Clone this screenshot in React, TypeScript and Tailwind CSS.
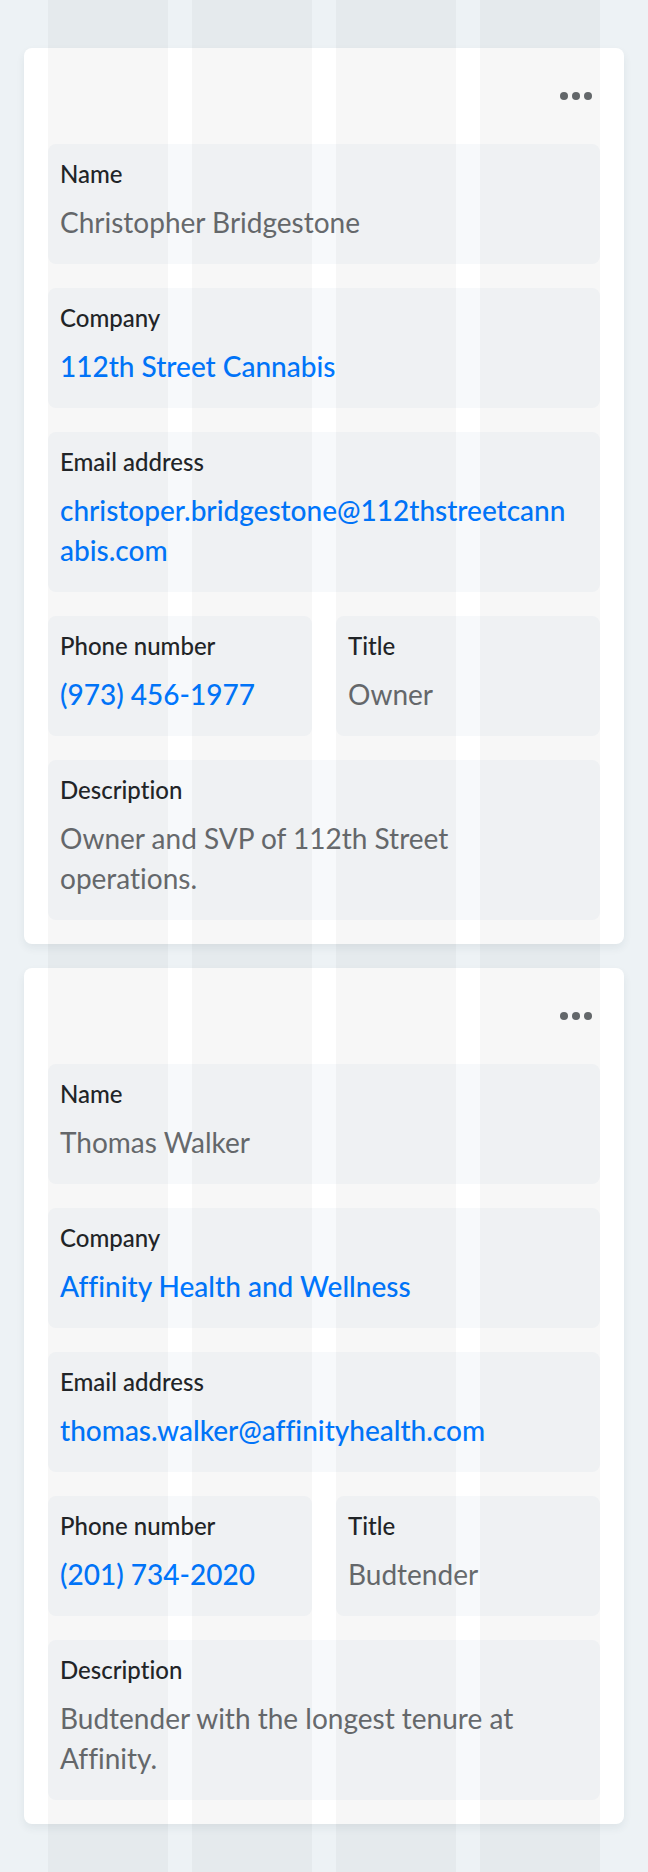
import React from "react";

type Contact = {
  name: string;
  company: string;
  email: string[];
  phone: string;
  title: string;
  description: string[];
};

const contacts: Contact[] = [
  {
    name: "Christopher Bridgestone",
    company: "112th Street Cannabis",
    email: ["christoper.bridgestone@112thstreetcann", "abis.com"],
    phone: "(973) 456-1977",
    title: "Owner",
    description: ["Owner and SVP of 112th Street", "operations."],
  },
  {
    name: "Thomas Walker",
    company: "Affinity Health and Wellness",
    email: ["thomas.walker@affinityhealth.com"],
    phone: "(201) 734-2020",
    title: "Budtender",
    description: ["Budtender with the longest tenure at", "Affinity."],
  },
];

function Lines({ lines }: { lines: string[] }) {
  return (
    <>
      {lines.map((line, i) => (
        <React.Fragment key={line}>
          {i > 0 && <br />}
          {line}
        </React.Fragment>
      ))}
    </>
  );
}

function Field({ label, lines, href, half }: { label: string; lines: string[]; href?: string; half?: boolean }) {
  return (
    <div className={`${half ? "col-span-1" : "col-span-2"} rounded-lg bg-[#f7f9fb] px-3 pt-3 pb-[22px]`}>
      <dt className="text-2xl leading-9 font-medium text-[#232629] [font-variant-ligatures:none]">{label}</dt>
      <dd className="mt-[10px] text-[28px] leading-10 text-[#686b6e] [font-variant-ligatures:none]">
        {href ? (
          <a href={href} className="font-medium text-[#0077ff]">
            <Lines lines={lines} />
          </a>
        ) : (
          <Lines lines={lines} />
        )}
      </dd>
    </div>
  );
}

function ContactCard({ contact }: { contact: Contact }) {
  return (
    <article className="rounded-lg bg-white px-6 pb-6 shadow-[0_4px_8px_rgba(30,50,70,0.07)]">
      <div className="flex h-24 items-center justify-end">
        <button type="button" aria-label="More options" className="flex size-12 items-center justify-center text-[#676b6e]">
          <svg viewBox="0 0 32 8" className="h-2 w-8" fill="currentColor" aria-hidden="true">
            <circle cx="4" cy="4" r="4" />
            <circle cx="16" cy="4" r="4" />
            <circle cx="28" cy="4" r="4" />
          </svg>
        </button>
      </div>
      <dl className="grid grid-cols-2 gap-6">
        <Field label="Name" lines={[contact.name]} />
        <Field label="Company" lines={[contact.company]} href="#company" />
        <Field label="Email address" lines={contact.email} href={`mailto:${contact.email.join("")}`} />
        <Field label="Phone number" lines={[contact.phone]} href={`tel:${contact.phone}`} half />
        <Field label="Title" lines={[contact.title]} half />
        <Field label="Description" lines={contact.description} />
      </dl>
    </article>
  );
}

export default function App() {
  return (
    <div className="relative min-h-screen bg-[#edf2f5] px-6 py-12 font-['Lato','Liberation_Sans',sans-serif]">
      <main className="flex flex-col gap-6">
        {contacts.map((contact) => (
          <ContactCard key={contact.name} contact={contact} />
        ))}
      </main>
      {/* Column guides drawn over the page */}
      <div aria-hidden="true" className="pointer-events-none absolute inset-0 grid grid-cols-4 gap-6 px-12">
        <div className="bg-black/3" />
        <div className="bg-black/3" />
        <div className="bg-black/3" />
        <div className="bg-black/3" />
      </div>
    </div>
  );
}
